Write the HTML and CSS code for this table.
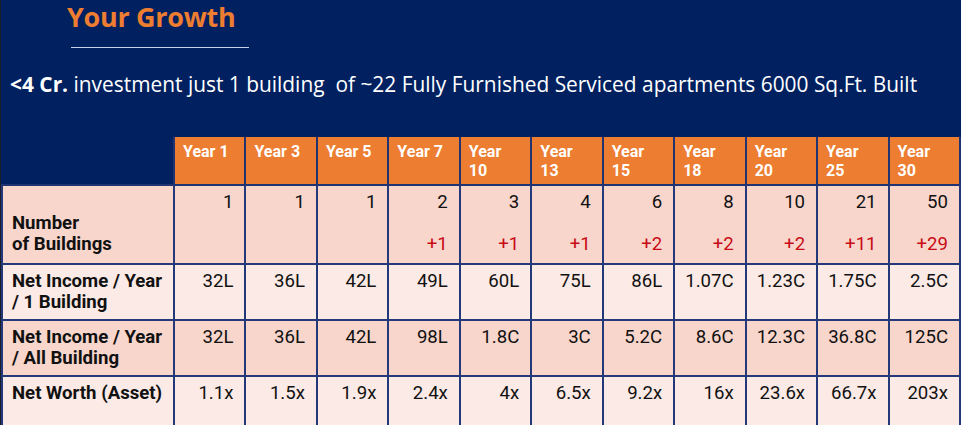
FILE: index.html
```html
<!DOCTYPE html>
<html lang="en">
<head>
<meta charset="utf-8">
<title>Your Growth</title>
<link rel="stylesheet" href="styles.css">
</head>
<body>
<main class="page">
  <header class="hero">
    <h1 class="title">Your Growth</h1>
    <div class="rule"></div>
  </header>
  <p class="lead"><strong>&lt;4 Cr.</strong> investment just 1 building &nbsp;of ~22 Fully Furnished Serviced apartments 6000 Sq.Ft. Built</p>
  <table class="growth">
    <colgroup>
      <col class="col-label">
      <col><col><col><col><col><col><col><col><col><col><col>
    </colgroup>
    <thead>
      <tr>
        <th class="corner"></th>
        <th>Year 1</th>
        <th>Year 3</th>
        <th>Year 5</th>
        <th>Year 7</th>
        <th>Year<br>10</th>
        <th>Year<br>13</th>
        <th>Year<br>15</th>
        <th>Year<br>18</th>
        <th>Year<br>20</th>
        <th>Year<br>25</th>
        <th>Year<br>30</th>
      </tr>
    </thead>
    <tbody>
      <tr class="band">
        <th class="label label-bottom">Number<br>of Buildings</th>
        <td><div class="count">1</div></td>
        <td><div class="count">1</div></td>
        <td><div class="count">1</div></td>
        <td><div class="count">2</div><div class="delta">+1</div></td>
        <td><div class="count">3</div><div class="delta">+1</div></td>
        <td><div class="count">4</div><div class="delta">+1</div></td>
        <td><div class="count">6</div><div class="delta">+2</div></td>
        <td><div class="count">8</div><div class="delta">+2</div></td>
        <td><div class="count">10</div><div class="delta">+2</div></td>
        <td><div class="count">21</div><div class="delta">+11</div></td>
        <td><div class="count">50</div><div class="delta">+29</div></td>
      </tr>
      <tr class="plain">
        <th class="label">Net Income / Year<br>/ 1 Building</th>
        <td>32L</td><td>36L</td><td>42L</td><td>49L</td><td>60L</td><td>75L</td><td>86L</td><td>1.07C</td><td>1.23C</td><td>1.75C</td><td>2.5C</td>
      </tr>
      <tr class="band">
        <th class="label">Net Income / Year<br>/ All Building</th>
        <td>32L</td><td>36L</td><td>42L</td><td>98L</td><td>1.8C</td><td>3C</td><td>5.2C</td><td>8.6C</td><td>12.3C</td><td>36.8C</td><td>125C</td>
      </tr>
      <tr class="plain last">
        <th class="label">Net Worth (Asset)</th>
        <td>1.1x</td><td>1.5x</td><td>1.9x</td><td>2.4x</td><td>4x</td><td>6.5x</td><td>9.2x</td><td>16x</td><td>23.6x</td><td>66.7x</td><td>203x</td>
      </tr>
    </tbody>
  </table>
</main>
</body>
</html>
```
FILE: styles.css
```css
html, body {
  margin: 0;
  padding: 0;
  background: #002060;
}
body {
  width: 961px;
  height: 425px;
  overflow: hidden;
}
.page {
  border-left: 1px solid #1c1e2c;
  height: 425px;
  box-sizing: border-box;
  overflow: hidden;
}
.hero {
  padding-left: 66px;
}
.title {
  margin: 0;
  font-family: "Open Sans", sans-serif;
  font-weight: 700;
  font-size: 27px;
  line-height: 34px;
  letter-spacing: -0.3px;
  color: #ED7D31;
}
.rule {
  margin: 13px 0 0 4px;
  width: 178px;
  height: 1px;
  background: #c6d1ea;
}
.lead {
  margin: 22px 0 0 9px;
  font-family: "Open Sans", sans-serif;
  font-size: 20.9px;
  line-height: 28px;
  color: #ffffff;
  white-space: nowrap;
}
.lead strong {
  font-weight: 700;
}
.growth {
  margin-top: 39px;
  width: 960px;
  table-layout: fixed;
  border-collapse: collapse;
  font-family: Roboto, "Liberation Sans", sans-serif;
  color: #111111;
}
.col-label {
  width: 172px;
}
.growth thead th {
  background: #ED7D31;
  color: #ffffff;
  font-weight: 700;
  font-size: 16px;
  line-height: 19px;
  text-align: left;
  vertical-align: top;
  padding: 5px 4px 4px 8px;
  height: 38px;
  border: 2px solid #1f3470;
  border-top: none;
}
.growth thead th.corner {
  background: #002060;
  border-left: none;
}
.growth tbody th,
.growth tbody td {
  font-size: 18.6px;
  line-height: 21px;
  border: 2px solid #24397a;
  padding: 6px 11px 6px 9px;
  vertical-align: top;
}
.growth tbody td {
  text-align: right;
  font-weight: 400;
}
.growth .label {
  text-align: left;
  font-weight: 700;
  padding-left: 9px;
  padding-right: 2px;
  white-space: nowrap;
}
.growth .label-bottom {
  vertical-align: bottom;
  padding-bottom: 8px;
}
.band th,
.band td {
  background: #F8D6CC;
}
.plain th,
.plain td {
  background: #FBEAE5;
}
.growth tbody tr:first-child td {
  height: 63px;
  padding-bottom: 8px;
}
.growth .last th,
.growth .last td {
  height: 42px;
}
.delta {
  margin-top: 21px;
  color: #C80A14;
}
```
